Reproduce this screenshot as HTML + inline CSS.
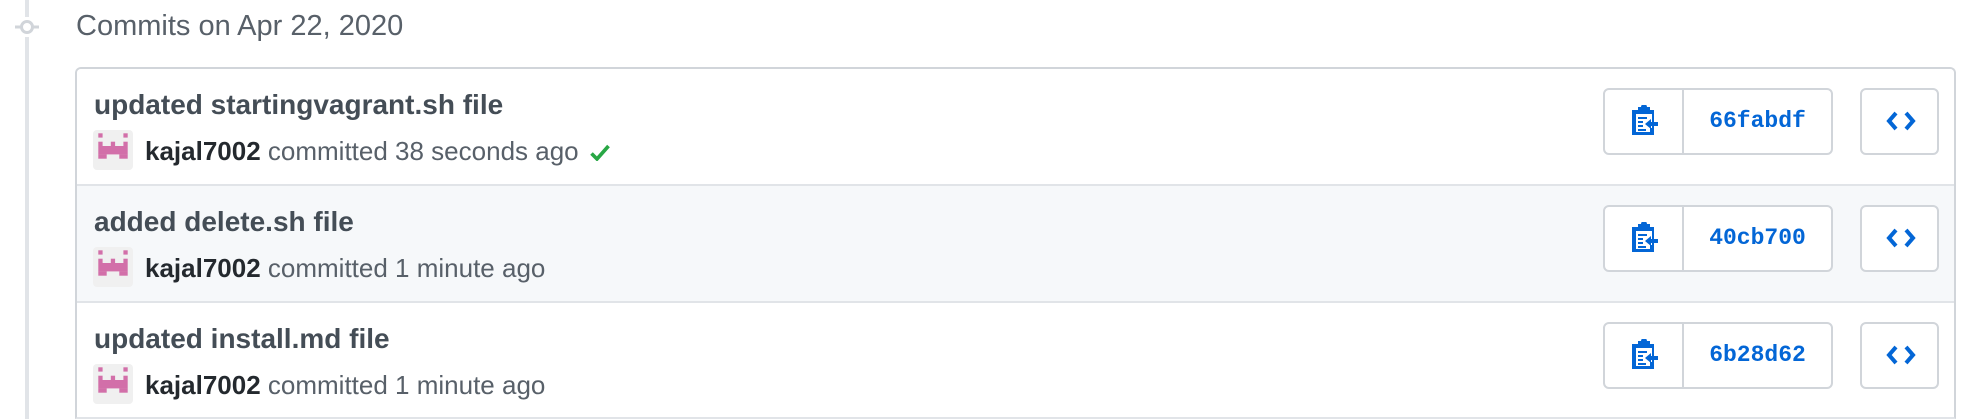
<!DOCTYPE html>
<html><head><meta charset="utf-8"><style>
*{margin:0;padding:0;box-sizing:border-box}
html,body{width:1971px;height:419px;overflow:hidden}
body{background:#fff;position:relative;font-family:"Liberation Sans",Helvetica,Arial,sans-serif}
.line{position:absolute;left:25px;top:0;width:4px;height:419px;background:#e1e4e8}
.node{position:absolute;left:15px;top:17px;width:24px;height:20px;background:#fff}
.date{position:absolute;left:76px;top:12px;font-size:29px;line-height:1;color:#586069}
.box{position:absolute;left:75px;top:67px;width:1881px;height:352px;border:2px solid #d1d5da;border-bottom-color:#e1e4e8;border-radius:6px 6px 0 0;overflow:hidden}
.row{position:absolute;left:0;right:0;height:117px;border-bottom:2px solid #e1e4e8}
.r{position:absolute;left:77px;width:1877px;height:115px}
.title{position:absolute;left:17px;top:22px;font-size:28px;line-height:1;font-weight:bold;color:#444d56;white-space:nowrap}
.av{position:absolute;left:16px;top:61px;width:40px;height:40px;background:#f0f0f0;border-radius:4px}
.meta{position:absolute;left:68px;top:69px;font-size:26px;line-height:1;color:#586069;white-space:nowrap}
.meta b{color:#24292e}
.grp{position:absolute;left:1526px;top:19px;width:230px;height:67px;border:2px solid #d1d5da;border-radius:6px;background:#fff}
.grp .div{position:absolute;left:77px;top:0;bottom:0;width:2px;background:#d1d5da}
.hash{position:absolute;left:79px;right:0;top:0;height:63px;line-height:63px;text-align:center;font-family:"Liberation Mono",monospace;font-weight:bold;font-size:23px;color:#0366d6}
.cb{position:absolute;left:1783px;top:19px;width:79px;height:67px;border:2px solid #d1d5da;border-radius:6px;background:#fff}
</style></head><body>
<div class="line"></div>
<div class="node"><svg width="24" height="20"><line x1="0" y1="10" x2="24" y2="10" stroke="#d1d5da" stroke-width="3"/><circle cx="12" cy="10" r="5.5" fill="#fff" stroke="#d1d5da" stroke-width="3"/></svg></div>
<div class="date">Commits on Apr 22, 2020</div>
<div class="box">
<div class="row" style="top:0;background:#fff"></div>
<div class="row" style="top:117px;background:#f6f8fa"></div>
<div class="row" style="top:234px;background:#fff;border-bottom:none"></div>
</div>
<div class="r" style="top:69px">
<div class="title">updated startingvagrant.sh file</div>
<div class="av"><svg width="40" height="40" fill="#d26fa9"><rect x="5.3" y="3.3" width="4.3" height="4.3"/><rect x="30.4" y="3.3" width="4.3" height="4.3"/><rect x="5.3" y="11.7" width="4.3" height="4.3"/><rect x="17.8" y="11.7" width="4.3" height="4.3"/><rect x="30.4" y="11.7" width="4.3" height="4.3"/><rect x="5.3" y="16" width="29.4" height="8.4"/><rect x="5.3" y="24.3" width="8.4" height="4.4"/><rect x="26.3" y="24.3" width="8.4" height="4.4"/></svg></div>
<div class="meta"><b>kajal7002</b> committed 38 seconds ago <svg width="20" height="17" viewBox="0 0 20 17" style="vertical-align:-1px;margin-left:4px"><path d="M1.5 9.5 L7 15 L18.5 2" fill="none" stroke="#28a745" stroke-width="3.6"/></svg></div>
<div class="grp"><svg style="position:absolute;left:24px;top:15px" width="30" height="31" viewBox="0 0 30 31" fill="#0366d6"><path d="M9 2h3a3 3 0 0 1 6 0h3v3h4v25H3V5h6z M7 9v18h14v-4h2V9z"/><rect x="9" y="12" width="9" height="2"/><rect x="9" y="16" width="5" height="2"/><rect x="9" y="20" width="5" height="2"/><rect x="9" y="24" width="8" height="2"/><path d="M16 19l6-5v3h7v4h-7v3z"/></svg><div class="div"></div><div class="hash">66fabdf</div></div>
<div class="cb"><svg style="position:absolute;left:24px;top:21px" width="30" height="20" viewBox="0 0 30 20"><path d="M10 2L3 10l7 8M20 2l7 8-7 8" fill="none" stroke="#0366d6" stroke-width="4"/></svg></div>
</div>
<div class="r" style="top:186px">
<div class="title">added delete.sh file</div>
<div class="av"><svg width="40" height="40" fill="#d26fa9"><rect x="5.3" y="3.3" width="4.3" height="4.3"/><rect x="30.4" y="3.3" width="4.3" height="4.3"/><rect x="5.3" y="11.7" width="4.3" height="4.3"/><rect x="17.8" y="11.7" width="4.3" height="4.3"/><rect x="30.4" y="11.7" width="4.3" height="4.3"/><rect x="5.3" y="16" width="29.4" height="8.4"/><rect x="5.3" y="24.3" width="8.4" height="4.4"/><rect x="26.3" y="24.3" width="8.4" height="4.4"/></svg></div>
<div class="meta"><b>kajal7002</b> committed 1 minute ago</div>
<div class="grp"><svg style="position:absolute;left:24px;top:15px" width="30" height="31" viewBox="0 0 30 31" fill="#0366d6"><path d="M9 2h3a3 3 0 0 1 6 0h3v3h4v25H3V5h6z M7 9v18h14v-4h2V9z"/><rect x="9" y="12" width="9" height="2"/><rect x="9" y="16" width="5" height="2"/><rect x="9" y="20" width="5" height="2"/><rect x="9" y="24" width="8" height="2"/><path d="M16 19l6-5v3h7v4h-7v3z"/></svg><div class="div"></div><div class="hash">40cb700</div></div>
<div class="cb"><svg style="position:absolute;left:24px;top:21px" width="30" height="20" viewBox="0 0 30 20"><path d="M10 2L3 10l7 8M20 2l7 8-7 8" fill="none" stroke="#0366d6" stroke-width="4"/></svg></div>
</div>
<div class="r" style="top:303px">
<div class="title">updated install.md file</div>
<div class="av"><svg width="40" height="40" fill="#d26fa9"><rect x="5.3" y="3.3" width="4.3" height="4.3"/><rect x="30.4" y="3.3" width="4.3" height="4.3"/><rect x="5.3" y="11.7" width="4.3" height="4.3"/><rect x="17.8" y="11.7" width="4.3" height="4.3"/><rect x="30.4" y="11.7" width="4.3" height="4.3"/><rect x="5.3" y="16" width="29.4" height="8.4"/><rect x="5.3" y="24.3" width="8.4" height="4.4"/><rect x="26.3" y="24.3" width="8.4" height="4.4"/></svg></div>
<div class="meta"><b>kajal7002</b> committed 1 minute ago</div>
<div class="grp"><svg style="position:absolute;left:24px;top:15px" width="30" height="31" viewBox="0 0 30 31" fill="#0366d6"><path d="M9 2h3a3 3 0 0 1 6 0h3v3h4v25H3V5h6z M7 9v18h14v-4h2V9z"/><rect x="9" y="12" width="9" height="2"/><rect x="9" y="16" width="5" height="2"/><rect x="9" y="20" width="5" height="2"/><rect x="9" y="24" width="8" height="2"/><path d="M16 19l6-5v3h7v4h-7v3z"/></svg><div class="div"></div><div class="hash">6b28d62</div></div>
<div class="cb"><svg style="position:absolute;left:24px;top:21px" width="30" height="20" viewBox="0 0 30 20"><path d="M10 2L3 10l7 8M20 2l7 8-7 8" fill="none" stroke="#0366d6" stroke-width="4"/></svg></div>
</div>
</body></html>
